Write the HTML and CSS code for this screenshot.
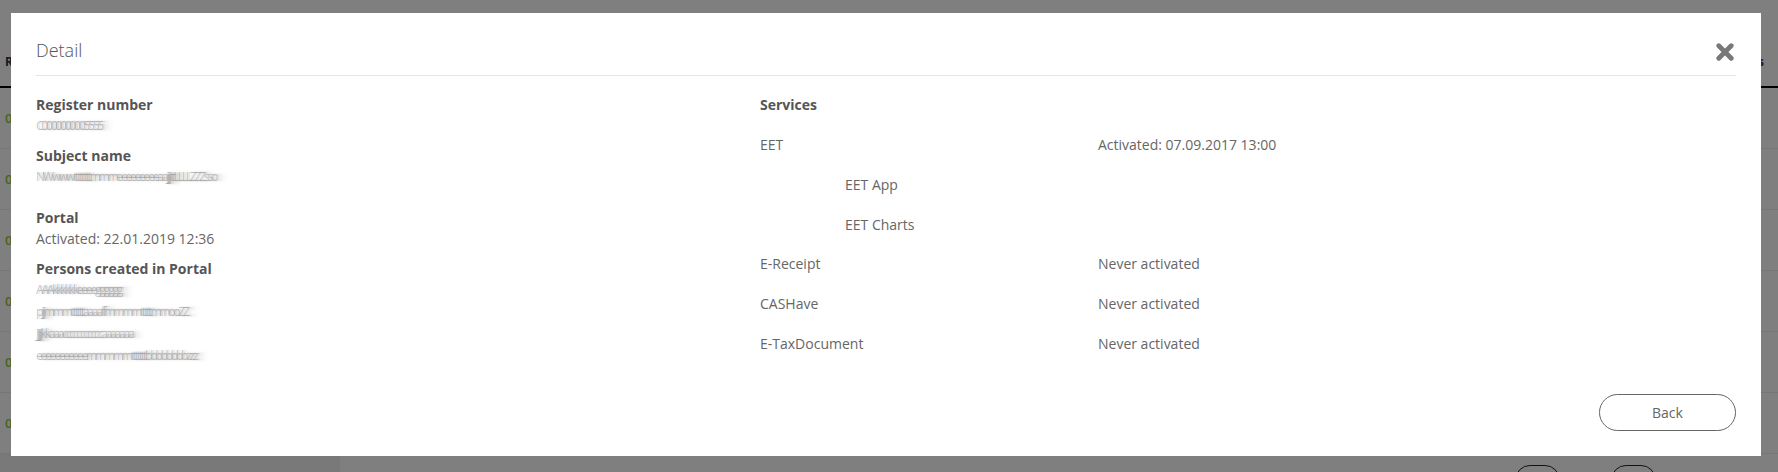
FILE: index.html
```html
<!DOCTYPE html>
<html lang="en">
<head>
<meta charset="utf-8">
<title>Detail</title>
<link rel="stylesheet" href="styles.css">
</head>
<body>
<div class="page">
  <div class="thead">
    <span class="th-left">R</span>
    <span class="th-right">Actions</span>
  </div>
  <div class="trow"><span class="num">0</span></div>
  <div class="trow"><span class="num">0</span></div>
  <div class="trow"><span class="num">0</span></div>
  <div class="trow"><span class="num">0</span></div>
  <div class="trow"><span class="num">0</span></div>
  <div class="trow"><span class="num">0</span></div>
  <div class="pager">
    <div class="pager-side"></div>
    <div class="pager-btns"><span class="pbtn"></span><span class="pbtn"></span></div>
  </div>
</div>
<div class="backdrop"></div>

<div class="modal">
  <div class="modal-header">
    <h4 class="modal-title">Detail</h4>
    <button class="close" aria-label="Close">
      <svg width="18" height="18" viewBox="0 0 18 18"><path d="M2.8 2.8 L15.2 15.2 M15.2 2.8 L2.8 15.2" stroke="#787878" stroke-width="4.8" stroke-linecap="round" fill="none"/></svg>
    </button>
  </div>
  <div class="modal-body">
    <div class="col-left">
      <div class="field">
        <div class="label">Register number</div>
        <div class="value blur">C0000000005555</div>
      </div>
      <div class="field field-wide">
        <div class="label">Subject name</div>
        <div class="value blur">NWwwwttttttttmmmeeeeeeeeeaajjjjttLLLLZZZsso</div>
      </div>
      <div class="field">
        <div class="label">Portal</div>
        <div class="value">Activated: 22.01.2019 12:36</div>
      </div>
      <div class="field">
        <div class="label">Persons created in Portal</div>
        <div class="value blur">AAAkkkkkkeeeegggggg</div>
        <div class="value blur">pjjjmmmttttttaaaaffmmmmtttttmmooZZ</div>
        <div class="value blur">JJjjjkkaaacccccccccccaaaaaaa</div>
        <div class="value blur">eeeeeeeeeeemmmmmtttttttbbbbbbbbzzz</div>
      </div>
    </div>
    <div class="col-right">
      <div class="label svc-title">Services</div>
      <div class="svc"><span class="svc-name">EET</span><span class="svc-val">Activated: 07.09.2017 13:00</span></div>
      <div class="svc svc-sub"><span class="svc-name">EET App</span></div>
      <div class="svc svc-sub"><span class="svc-name">EET Charts</span></div>
      <div class="svc"><span class="svc-name">E-Receipt</span><span class="svc-val">Never activated</span></div>
      <div class="svc"><span class="svc-name">CASHave</span><span class="svc-val">Never activated</span></div>
      <div class="svc"><span class="svc-name">E-TaxDocument</span><span class="svc-val">Never activated</span></div>
    </div>
  </div>
  <div class="modal-footer">
    <button class="btn-back">Back</button>
  </div>
</div>
</body>
</html>
```

FILE: styles.css
```css
* { box-sizing: border-box; }

html, body {
  margin: 0;
  padding: 0;
  width: 1778px;
  height: 472px;
  overflow: hidden;
  background: #ffffff;
  font-family: "Open Sans", "Liberation Sans", sans-serif;
}

/* background page */
.page {
  width: 1778px;
  height: 472px;
  overflow: hidden;
}

.thead {
  height: 88px;
  border-bottom: 2px solid #000;
  display: flex;
  justify-content: space-between;
  align-items: flex-end;
  padding: 0 14px 16px 5px;
  font-size: 12px;
  font-weight: 700;
  line-height: 16px;
}

.th-left { color: #333; }
.th-right { color: #2a3f5c; }

.trow {
  height: 61px;
  border-bottom: 1px solid #ececec;
  display: flex;
  align-items: center;
  padding-left: 5px;
  font-size: 13px;
  font-weight: 600;
  color: #8dc63f;
}

.pager {
  display: flex;
  height: 18px;
  overflow: hidden;
}

.pager-side {
  width: 340px;
  background: #f3f3f3;
}

.pager-btns {
  flex: 1;
  display: flex;
  justify-content: flex-end;
  gap: 51px;
  padding: 11px 122px 0 0;
}

.pbtn {
  width: 45px;
  height: 30px;
  border: 1px solid #222;
  border-radius: 16px;
  background: #fff;
}

.backdrop {
  position: fixed;
  inset: 0;
  background: rgba(0, 0, 0, 0.5);
}

/* modal */
.modal {
  position: absolute;
  top: 13px;
  left: 11px;
  width: 1750px;
  height: 443px;
  background: #fff;
  padding: 0 25px 25px;
  display: flex;
  flex-direction: column;
}

.modal-header {
  display: flex;
  justify-content: space-between;
  align-items: flex-start;
  padding: 24px 0 12px;
  border-bottom: 1px solid #e5e5e5;
}

.modal-title {
  margin: 0;
  font-size: 18px;
  line-height: 26px;
  font-weight: 300;
  color: #555;
}

.close {
  margin: 6px 2px 0 0;
  padding: 0;
  border: 0;
  background: none;
  width: 18px;
  height: 18px;
  display: block;
}

.close svg { display: block; }

.modal-body {
  flex: 1;
  display: flex;
  padding-top: 19px;
}

.col-left {
  width: 724px;
}

.field {
  margin-bottom: 9px;
}

.field-wide {
  margin-bottom: 20px;
}

.label {
  font-size: 14px;
  line-height: 20px;
  font-weight: 700;
  color: #555;
}

.value {
  font-size: 14px;
  line-height: 22px;
  color: #666;
}

.blur {
  font-size: 12px;
  letter-spacing: -2.2px;
  color: rgba(150, 150, 150, 0.55);
  text-shadow:
    2px 0 1px rgba(170, 170, 170, 0.35),
    5px 0 2px rgba(200, 200, 200, 0.35),
    9px 0 3px rgba(220, 220, 220, 0.35);
  white-space: nowrap;
}

.col-right {
  flex: 1;
}

.svc-title {
  margin-bottom: 10px;
}

.svc {
  display: flex;
  height: 39.7px;
  align-items: center;
  font-size: 14px;
  color: #666;
}

.svc-name {
  width: 338px;
}

.svc-sub .svc-name {
  padding-left: 85px;
}

.modal-footer {
  display: flex;
  justify-content: flex-end;
}

.btn-back {
  width: 137px;
  height: 37px;
  border: 1px solid #666;
  border-radius: 19px;
  background: #fff;
  font-family: "Open Sans", "Liberation Sans", sans-serif;
  font-size: 14px;
  color: #666;
  padding: 0;
}
```
